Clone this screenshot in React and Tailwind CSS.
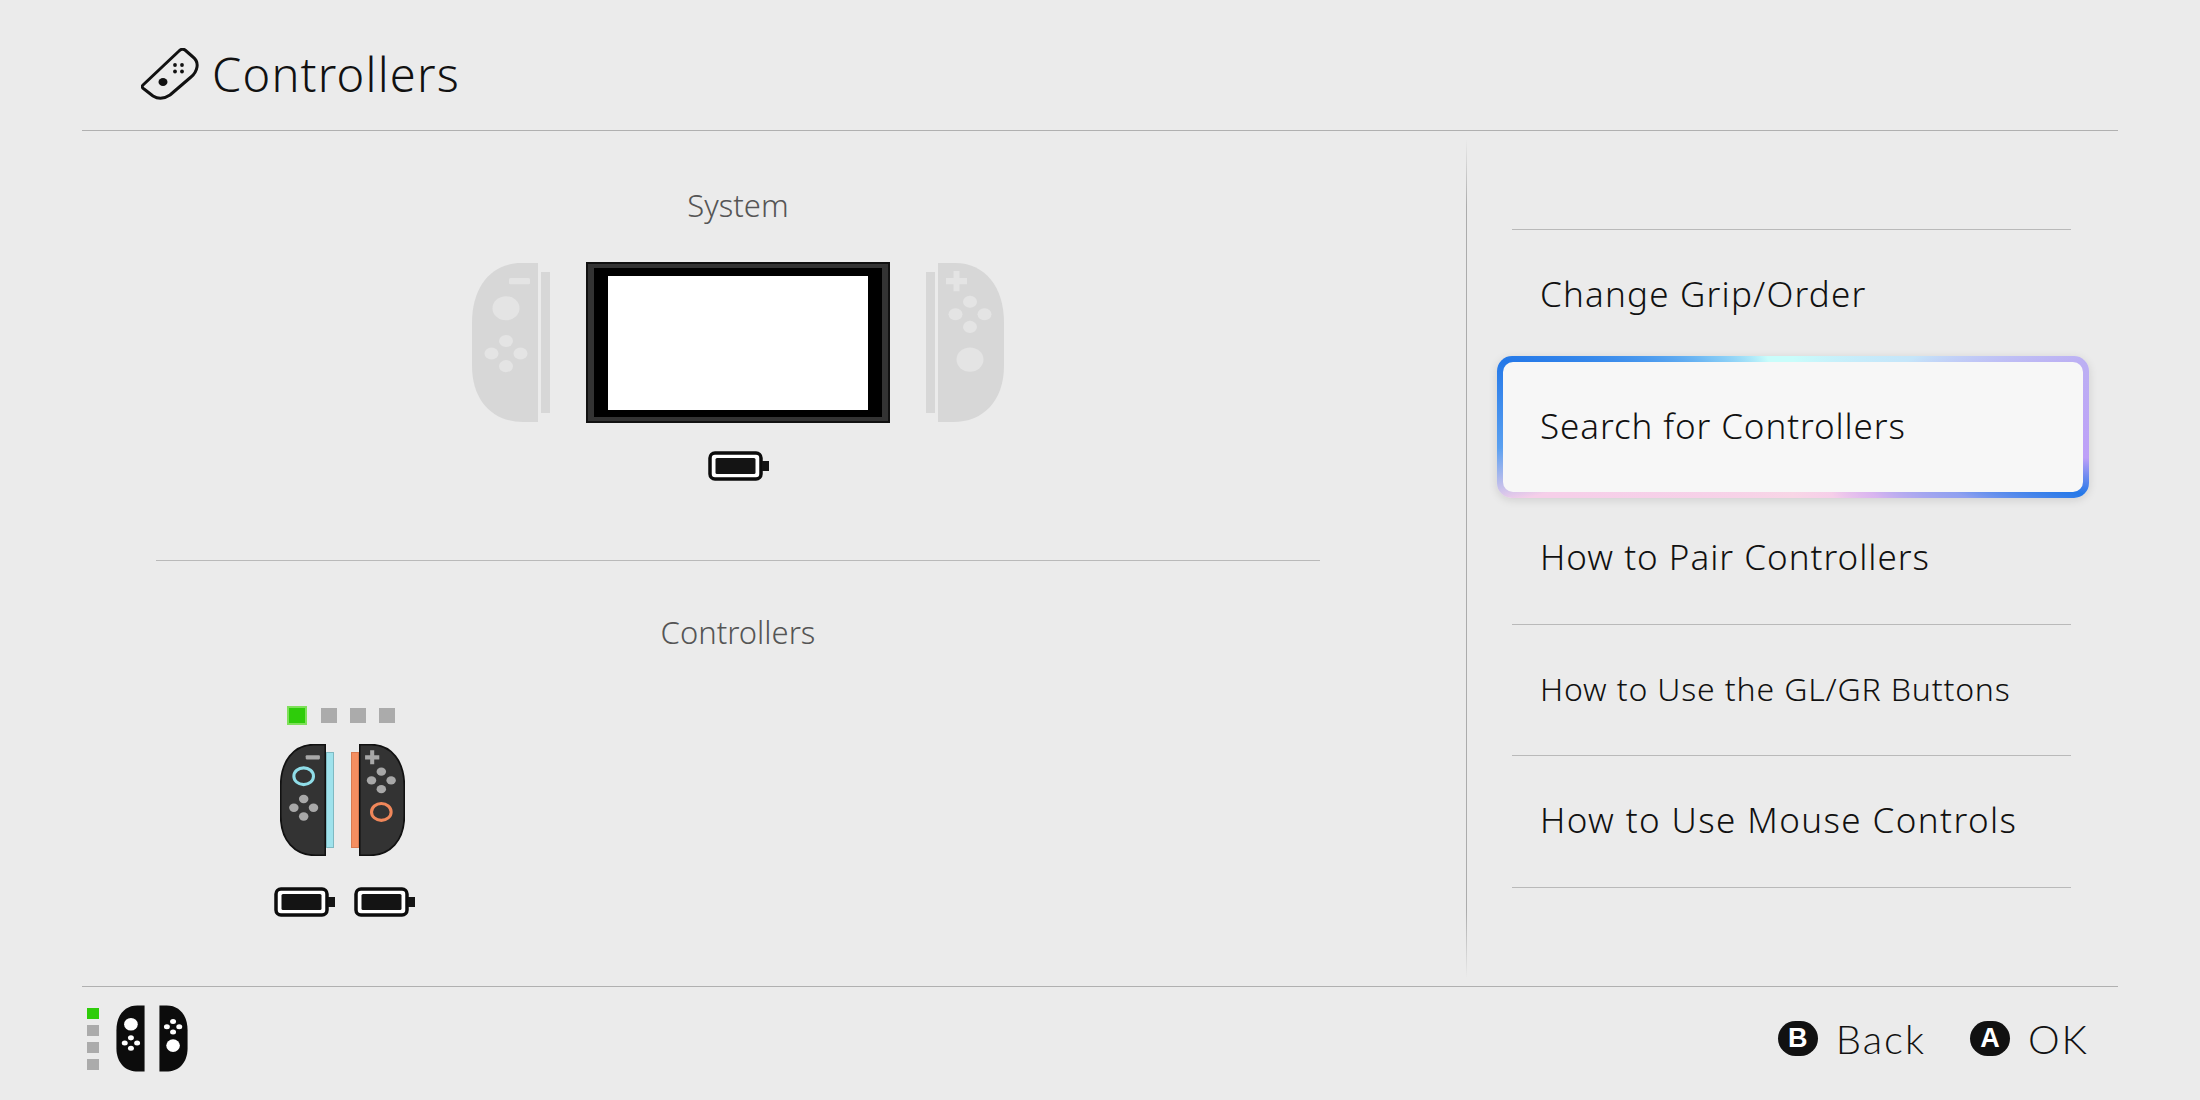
const menuItems = [
  { label: 'Change Grip/Order', text: 'text-[35px] tracking-[1.2px]' },
  { label: 'Search for Controllers', text: 'text-[35px] tracking-[0.9px]', selected: true },
  { label: 'How to Pair Controllers', text: 'text-[35px] tracking-[1px]' },
  { label: 'How to Use the GL/GR Buttons', text: 'text-[32px] tracking-[0.85px]' },
  { label: 'How to Use Mouse Controls', text: 'text-[35px] tracking-[1.4px]' },
];

function RemoteIcon() {
  return (
    <svg viewBox="0 0 58 52" className="h-[52px] w-[58px]" fill="none">
      <path
        d="M2 37 L38 3 Q41 0 44 2 L52 9 Q57 13 56 19 Q55 25 50 29 L29 47 Q20 53 12 48 L3 41 Q0 39 2 37 Z"
        stroke="#111"
        strokeWidth="3"
        strokeLinejoin="round"
      />
      <ellipse cx="22" cy="34" rx="4.5" ry="4" fill="#111" />
      <circle cx="34" cy="17" r="1.9" fill="#111" />
      <circle cx="41" cy="17" r="1.9" fill="#111" />
      <circle cx="34" cy="23.500" r="1.9" fill="#111" />
      <circle cx="41" cy="23.500" r="1.9" fill="#111" />
    </svg>
  );
}

function Battery() {
  return (
    <svg viewBox="0 0 61 30" className="h-[30px] w-[61px]">
      <rect x="2" y="2" width="51" height="26" rx="5" fill="#fff" stroke="#0c0c0c" strokeWidth="3.500" />
      <rect x="7.500" y="7" width="40" height="16" rx="1.500" fill="#141414" />
      <rect x="54" y="10" width="7" height="10" fill="#141414" />
    </svg>
  );
}

function JoyCon({ side, className, body, stroke = 'none', button, stickFill, stickStroke, mark, big }) {
  const right = side === 'right';
  const dpadY = right ? 52 : 91;
  const stickY = right ? 97 : 46;
  const stickRx = big ? 16 : stickStroke ? 14.500 : 13.500;
  const stickRy = big ? 15 : 12;
  return (
    <svg viewBox="0 0 68 160" preserveAspectRatio="none" className={className}>
      <g transform={right ? 'translate(68 0) scale(-1 1)' : undefined}>
        <path
          d="M67 1 H50 C20 1 1 25 1 60 V103 C1 138 22 159 52 159 H67 Z"
          fill={body}
          stroke={stroke}
          strokeWidth="2.500"
        />
        <ellipse
          cx="35"
          cy={stickY}
          rx={stickRx}
          ry={stickRy}
          fill={stickFill}
          stroke={stickStroke ?? 'none'}
          strokeWidth={stickStroke ? 4.500 : 0}
        />
        <ellipse cx="35" cy={dpadY - 12.500} rx="7" ry="6" fill={button} />
        <ellipse cx="35" cy={dpadY + 12.500} rx="7" ry="6" fill={button} />
        <ellipse cx="20.500" cy={dpadY} rx="7" ry="6" fill={button} />
        <ellipse cx="49.500" cy={dpadY} rx="7" ry="6" fill={button} />
        {mark === 'minus' ? <rect x="38" y="16" width="21" height="6" rx="1.500" fill={button} /> : null}
        {mark === 'plus' ? (
          <path d="M38 16 H45.500 V9 H51.500 V16 H59 V22 H51.500 V29 H45.500 V22 H38 Z" fill={button} />
        ) : null}
      </g>
    </svg>
  );
}

function SystemPreview() {
  return (
    <div className="flex items-stretch justify-center">
      <JoyCon side="left" className="h-[161px] w-[68px]" body="#d7d7d7" button="#e4e4e4" stickFill="#e4e4e4" mark="minus" />
      <div className="my-[10px] ml-[2px] w-[9px] bg-[#d7d7d7]" />
      <div className="ml-[36px] flex h-[161px] w-[304px] items-center justify-center border-2 border-[#111] bg-[#333]">
        <div className="flex h-[149px] w-[288px] items-center justify-center bg-black">
          <div className="h-[134px] w-[260px] bg-white" />
        </div>
      </div>
      <div className="my-[10px] ml-[36px] w-[9px] bg-[#d7d7d7]" />
      <JoyCon side="right" className="ml-[2px] h-[161px] w-[68px]" body="#d7d7d7" button="#e4e4e4" stickFill="#e4e4e4" mark="plus" />
    </div>
  );
}

function PlayerCard() {
  return (
    <div className="flex w-[142px] flex-col">
      <div className="ml-[15px] flex items-center gap-[13px]">
        <div className="h-[15px] w-[16px] bg-[#2ecc0a] shadow-[0_0_0_2px_#7ee05a]" />
        <div className="ml-[3px] h-[15px] w-[16px] bg-[#ababab]" />
        <div className="h-[15px] w-[16px] bg-[#ababab]" />
        <div className="h-[15px] w-[16px] bg-[#ababab]" />
      </div>
      <div className="ml-[6px] mt-[21px] flex">
        <JoyCon side="left" className="h-[112px] w-[46px]" body="#333" stroke="#111" button="#a8a8a8" stickFill="#333" stickStroke="#8fdde8" mark="minus" />
        <div className="my-[8px] h-[96px] w-[8px] border border-[#7fb9c2] bg-[#9fe2ec]" />
        <div className="my-[8px] ml-[17px] h-[96px] w-[8px] border border-[#d9794f] bg-[#f58e60]" />
        <JoyCon side="right" className="h-[112px] w-[46px]" body="#333" stroke="#111" button="#a8a8a8" stickFill="#333" stickStroke="#f0875a" mark="plus" />
      </div>
      <div className="mt-[31px] flex gap-[19px]">
        <Battery />
        <Battery />
      </div>
    </div>
  );
}

function MenuRow({ item }) {
  return (
    <div className="relative flex h-[131.500px] items-center border-b border-[#b9b9b9] pb-[2px] pl-[28px]">
      {item.selected ? (
        <div className="absolute -left-[15px] -right-[18px] -inset-y-[6px] z-10 rounded-[15px] bg-[conic-gradient(#c9fdfb_0deg,#c5e6fa_60deg,#bcb0f3_77deg,#bd9ff8_96deg,#2478e8_103deg,#8fa0f0_112deg,#d9b5f0_130deg,#f6cfe9_150deg,#f8d6e6_180deg,#f6cfe9_255deg,#5aa0f0_266deg,#2478e8_283deg,#7cc4f5_310deg,#c9fdfb_340deg)] p-[6px] shadow-[0_2px_10px_rgba(0,0,0,0.12)]">
          <div className="flex h-full items-center rounded-[10px] bg-[#f7f7f7] pb-[2px] pl-[37px]">
            <span className={`${item.text} font-light text-[#111]`}>{item.label}</span>
          </div>
        </div>
      ) : (
        <span className={`${item.text} font-light text-[#111]`}>{item.label}</span>
      )}
    </div>
  );
}

function Hint({ letter, label }) {
  return (
    <div className="flex items-center gap-[18px]">
      <span className="flex h-[35px] w-[40px] items-center justify-center rounded-full bg-[#111] font-['Liberation_Sans',sans-serif] text-[27px] font-bold text-white">
        {letter}
      </span>
      <span className="font-['Lato',sans-serif] text-[40px] font-light tracking-[2px] text-[#111]">{label}</span>
    </div>
  );
}

export default function App() {
  return (
    <div className="flex h-[1100px] w-[2200px] flex-col overflow-hidden bg-[#ebebeb] font-['Noto_Sans',sans-serif]">
      <header className="mx-[82px] flex h-[131px] shrink-0 items-center gap-[13px] border-b border-[#b0b0b0] pl-[59px] pt-[18px]">
        <RemoteIcon />
        <h1 className="text-[47px] font-light tracking-[1.2px] text-[#111]">Controllers</h1>
      </header>

      <main className="flex h-[855px] shrink-0">
        <section className="w-[1466px] shrink-0 pl-[156px] pr-[146px]">
          <div className="flex h-[430px] flex-col items-center border-b border-[#b9b9b9]">
            <div className="mt-[53px] text-[31px] font-light leading-[42px] text-[#555]">System</div>
            <div className="mt-[36px]">
              <SystemPreview />
            </div>
            <div className="mt-[28px]">
              <Battery />
            </div>
          </div>
          <div className="flex flex-col">
            <div className="mt-[51px] text-center text-[31px] font-light leading-[40px] text-[#555]">Controllers</div>
            <div className="ml-[118px] mt-[56px]">
              <PlayerCard />
            </div>
          </div>
        </section>

        <div className="my-[8px] w-px shrink-0 bg-[linear-gradient(to_bottom,transparent,#ababab_8%,#ababab_92%,transparent)]" />

        <aside className="ml-[45px] w-[559px] shrink-0 pt-[98px]">
          <div className="border-t border-[#b9b9b9]">
            {menuItems.map((item) => (
              <MenuRow key={item.label} item={item} />
            ))}
          </div>
        </aside>
      </main>

      <footer className="mx-[82px] flex flex-1 items-center justify-between border-t border-[#b0b0b0] pb-[10px] pl-[5px] pr-[29px]">
        <div className="flex items-center gap-[17px]">
          <div className="flex flex-col gap-[6px]">
            <div className="h-[11px] w-[12px] bg-[#2ecc0a]" />
            <div className="h-[11px] w-[12px] bg-[#ababab]" />
            <div className="h-[11px] w-[12px] bg-[#ababab]" />
            <div className="h-[11px] w-[12px] bg-[#ababab]" />
          </div>
          <div className="flex gap-[14px]">
            <JoyCon side="left" big className="h-[67px] w-[29px]" body="#0c0c0c" button="#fff" stickFill="#fff" />
            <JoyCon side="right" big className="h-[67px] w-[29px]" body="#0c0c0c" button="#fff" stickFill="#fff" />
          </div>
        </div>
        <div className="flex items-center gap-[44px]">
          <Hint letter="B" label="Back" />
          <Hint letter="A" label="OK" />
        </div>
      </footer>
    </div>
  );
}
